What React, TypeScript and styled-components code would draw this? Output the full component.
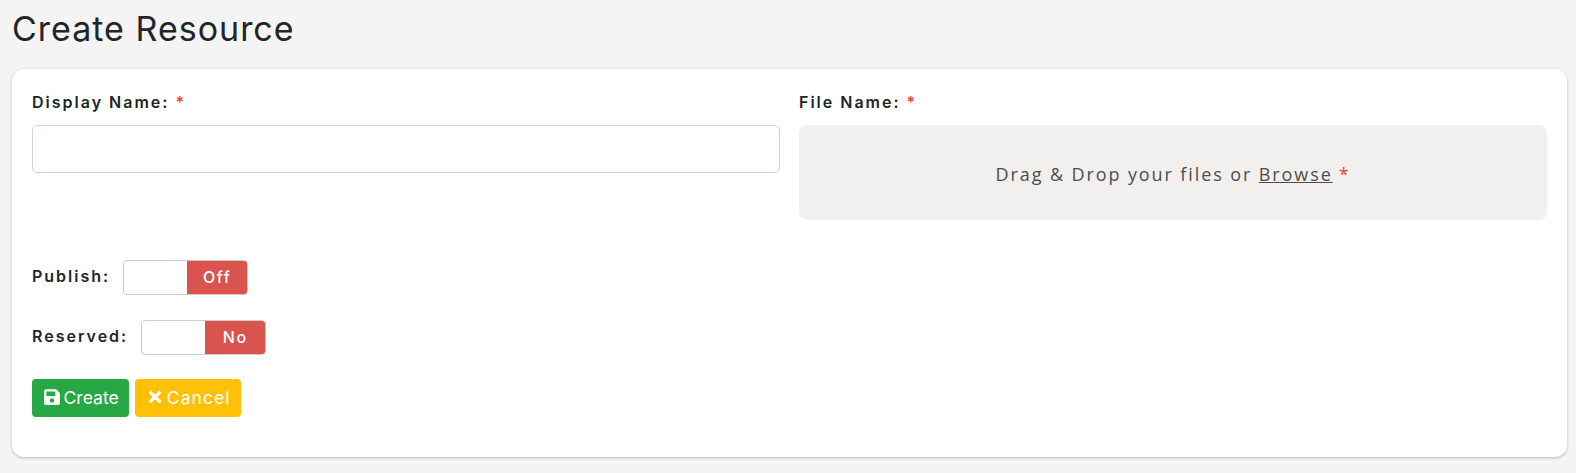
import React from 'react';
import styled, { createGlobalStyle } from 'styled-components';
import { FaSave, FaTimes } from 'react-icons/fa';

const GlobalStyle = createGlobalStyle`
  html, body {
    margin: 0;
    background: #f4f4f4;
    font-family: Inter, 'Liberation Sans', sans-serif;
  }
  * { box-sizing: border-box; }
`;

const Page = styled.div`
  height: 473px;
  padding: 0 9px 0 12px;
  overflow: hidden;
`;

const Title = styled.h1`
  margin: 0;
  height: 69px;
  padding-top: 8px;
  font-size: 34px;
  line-height: 41px;
  font-weight: 400;
  letter-spacing: 1px;
  color: #212529;
`;

const Card = styled.div`
  height: 388px;
  padding: 21px 20px 0;
  background: #fff;
  border-radius: 12px;
  box-shadow: 0 1px 3px rgba(0, 0, 0, 0.25);
`;

const Columns = styled.div`
  display: grid;
  grid-template-columns: 748px 748px;
  column-gap: 19px;
  height: 170px;
`;

const Field = styled.div`
  display: flex;
  flex-direction: column;
`;

const Label = styled.label`
  display: block;
  height: 35px;
  font-size: 16px;
  line-height: 24px;
  font-weight: 600;
  letter-spacing: 2px;
  color: #212529;
`;

const Star = styled.span`
  color: #f44336;
`;

const TextInput = styled.input`
  height: 48px;
  width: 100%;
  border: 1px solid #ced4da;
  border-radius: 5px;
  background: #fff;
`;

const DropZone = styled.div`
  height: 95px;
  padding-top: 2px;
  display: flex;
  align-items: center;
  justify-content: center;
  background: #f1f0ef;
  border-radius: 8px;
  font-family: 'Open Sans', sans-serif;
  font-size: 18px;
  font-weight: 500;
  letter-spacing: 1.9px;
  color: #4d4d4d;
`;

const Browse = styled.span`
  text-decoration: underline;
  margin-right: 6px;
`;

const ToggleRow = styled.div<{ $gap: number }>`
  display: flex;
  align-items: center;
  height: 35px;
  margin-bottom: ${props => props.$gap}px;
`;

const ToggleLabel = styled.span`
  font-size: 16px;
  font-weight: 600;
  letter-spacing: 2px;
  color: #212529;
  margin: 0 13px 3px 0;
`;

const Toggle = styled.div`
  display: flex;
  width: 125px;
  height: 35px;
  border: 1px solid #ccc;
  border-radius: 4px;
  background: #fff;
  overflow: hidden;
`;

const ToggleBlank = styled.div`
  flex: 1;
`;

const ToggleOption = styled.div`
  width: 60px;
  padding-bottom: 2px;
  display: flex;
  align-items: center;
  justify-content: center;
  background: #d9534f;
  color: #fff;
  font-size: 16px;
  font-weight: 500;
  letter-spacing: 1.5px;
`;

const Buttons = styled.div`
  display: flex;
  gap: 6px;
`;

const Button = styled.button<{ $bg: string; $spacing: number }>`
  height: 38px;
  display: flex;
  align-items: center;
  gap: 3px;
  padding: 0 10.5px 2px;
  border: 0;
  border-radius: 4px;
  background: ${props => props.$bg};
  color: #fff;
  font-family: Inter, sans-serif;
  font-size: 17.6px;
  letter-spacing: ${props => props.$spacing}px;
`;

const App = () => (
  <Page>
    <GlobalStyle />
    <Title>Create Resource</Title>
    <Card>
      <Columns>
        <Field>
          <Label>Display Name: <Star>*</Star></Label>
          <TextInput type="text" />
        </Field>
        <Field>
          <Label>File Name: <Star>*</Star></Label>
          <DropZone>
            Drag &amp; Drop your files or&nbsp;<Browse>Browse</Browse><Star>*</Star>
          </DropZone>
        </Field>
      </Columns>
      <ToggleRow $gap={25}>
        <ToggleLabel>Publish:</ToggleLabel>
        <Toggle>
          <ToggleBlank />
          <ToggleOption>Off</ToggleOption>
        </Toggle>
      </ToggleRow>
      <ToggleRow $gap={24}>
        <ToggleLabel>Reserved:</ToggleLabel>
        <Toggle>
          <ToggleBlank />
          <ToggleOption>No</ToggleOption>
        </Toggle>
      </ToggleRow>
      <Buttons>
        <Button $bg="#28a745" $spacing={0}><FaSave size={18} />Create</Button>
        <Button $bg="#ffc107" $spacing={1}><FaTimes size={18} />Cancel</Button>
      </Buttons>
    </Card>
  </Page>
);

export default App;
